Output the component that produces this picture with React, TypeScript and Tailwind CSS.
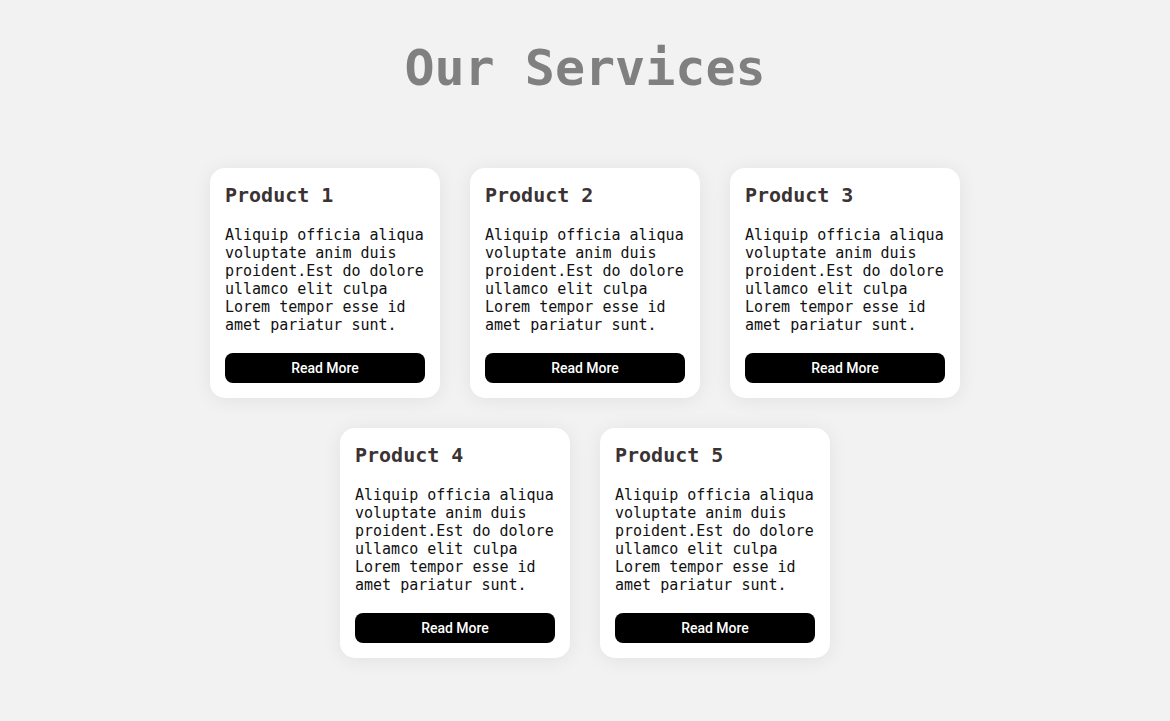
import React from 'react';

const products = [1, 2, 3, 4, 5];

const body =
  'Aliquip officia aliqua voluptate anim duis proident.Est do dolore ullamco elit culpa Lorem tempor esse id amet pariatur sunt.';

function ServiceCard({ n }: { n: number }) {
  return (
    <div className="w-[230px] rounded-[15px] bg-white p-[15px] shadow-[0_2px_20px_rgba(0,0,0,0.07)]">
      <h3 className="mb-[18px] text-[20px] font-bold leading-[25px] text-[#3b3333]">Product {n}</h3>
      <p className="mb-[19px] text-[15px] leading-[18px] text-[#111]">{body}</p>
      <button className="h-[30px] w-full rounded-lg bg-black font-['Roboto',Arial,sans-serif] text-[14px] font-medium text-white">
        Read More
      </button>
    </div>
  );
}

export default function App() {
  return (
    <div className="min-h-[721px] bg-[#f2f2f2] pt-[39px] font-['DejaVu_Sans_Mono',monospace]">
      <h1 className="mb-[71px] text-center text-[50px] font-bold leading-[58px] text-[#808080]">Our Services</h1>
      <div className="mx-auto flex w-[750px] flex-wrap justify-center gap-[30px]">
        {products.map((n) => (
          <ServiceCard key={n} n={n} />
        ))}
      </div>
    </div>
  );
}
